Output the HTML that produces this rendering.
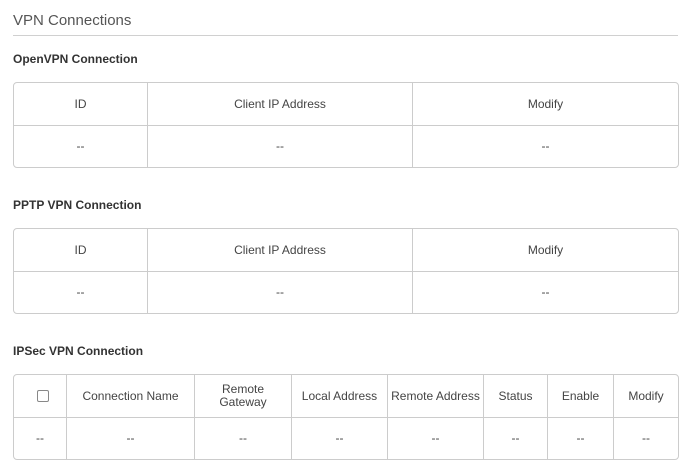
<!DOCTYPE html>
<html><head><style>
body{margin:0;background:#fff;font-family:"Liberation Sans",Arial,sans-serif;color:#333;width:683px;height:469px;overflow:hidden;position:relative}
.t{position:absolute;left:13px;top:12px;font-size:15px;color:#555}
.hr{position:absolute;left:13px;top:35px;width:665px;height:1px;background:#d0d0d0}
.h{position:absolute;left:13px;font-size:12px;font-weight:bold;color:#333}
table{position:absolute;left:13px;width:666px;border-collapse:separate;border-spacing:0;border:1px solid #ccc;border-radius:4px;font-size:12px;color:#444;table-layout:fixed}
td{text-align:center;border-right:1px solid #ccc;border-bottom:1px solid #ccc;padding:0;height:42px;line-height:13px}
td:last-child{border-right:none}
tr:last-child td{border-bottom:none;height:41px}
.cb{display:inline-block;width:10px;height:10px;border:1px solid #888;border-radius:2px;vertical-align:middle}
</style></head><body>
<div class="t">VPN Connections</div>
<div class="hr"></div>
<div class="h" style="top:52px">OpenVPN Connection</div>
<table style="top:82px"><colgroup><col style="width:134px"><col style="width:265px"><col></colgroup>
<tr><td>ID</td><td>Client IP Address</td><td>Modify</td></tr>
<tr><td>--</td><td>--</td><td>--</td></tr></table>
<div class="h" style="top:198px">PPTP VPN Connection</div>
<table style="top:228px"><colgroup><col style="width:134px"><col style="width:265px"><col></colgroup>
<tr><td>ID</td><td>Client IP Address</td><td>Modify</td></tr>
<tr><td>--</td><td>--</td><td>--</td></tr></table>
<div class="h" style="top:344px">IPSec VPN Connection</div>
<table style="top:374px"><colgroup><col style="width:53px"><col style="width:128px"><col style="width:97px"><col style="width:96px"><col style="width:96px"><col style="width:64px"><col style="width:66px"><col></colgroup>
<tr><td style="padding-left:6px"><span class="cb"></span></td><td>Connection Name</td><td>Remote<br>Gateway</td><td>Local Address</td><td>Remote Address</td><td>Status</td><td>Enable</td><td>Modify</td></tr>
<tr><td>--</td><td>--</td><td>--</td><td>--</td><td>--</td><td>--</td><td>--</td><td>--</td></tr></table>
</body></html>
